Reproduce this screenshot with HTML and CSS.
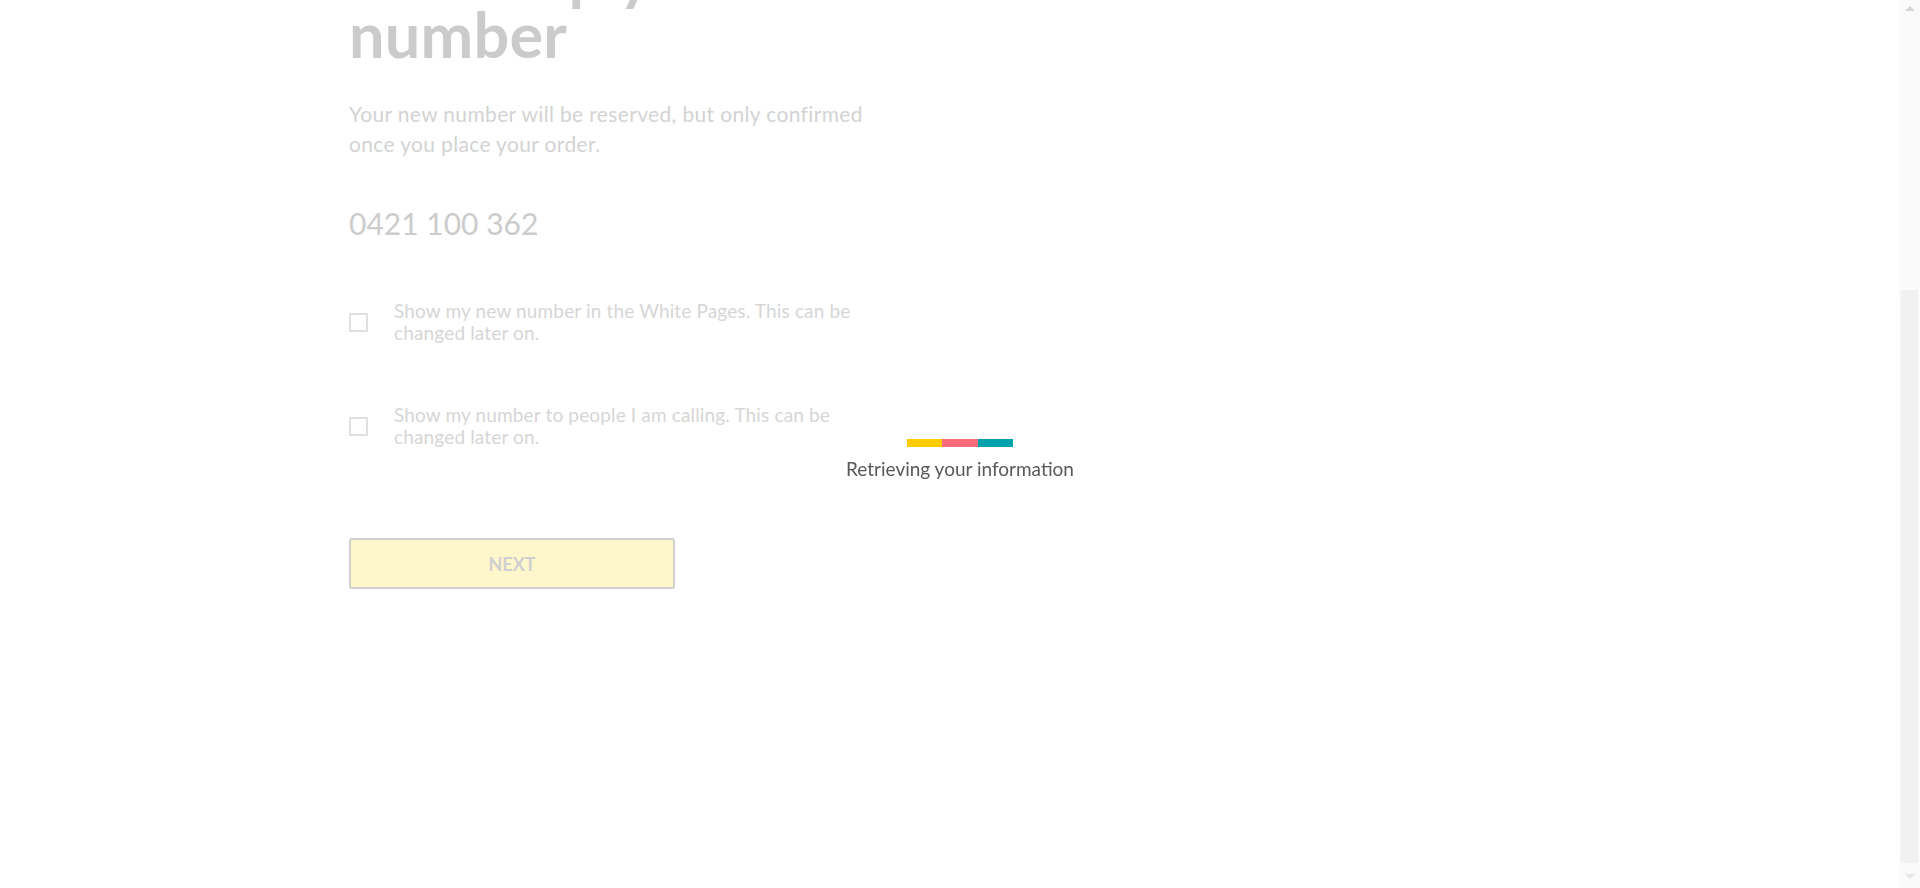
FILE: index.html
```html
<!DOCTYPE html>
<html lang="en">
<head>
<meta charset="utf-8">
<title>Your new number</title>
<link rel="stylesheet" href="styles.css">
</head>
<body>
<main class="page">
  <section class="form">
    <h1 class="title">Shake up your<br>number</h1>
    <p class="lead">Your new number will be reserved, but only confirmed once you place your order.</p>
    <div class="phone">0421 100 362</div>
    <label class="check">
      <span class="box"></span>
      <span class="check-text">Show my new number in the White Pages. This can be changed later on.</span>
    </label>
    <label class="check">
      <span class="box"></span>
      <span class="check-text">Show my number to people I am calling. This can be changed later on.</span>
    </label>
    <button class="next" type="button">NEXT</button>
  </section>
</main>

<div class="overlay">
  <div class="loader">
    <div class="bar"><span class="seg yellow"></span><span class="seg pink"></span><span class="seg teal"></span></div>
    <div class="loader-text">Retrieving your information</div>
  </div>
</div>

<div class="scrollbar">
  <span class="arrow up"></span>
  <div class="track"><div class="thumb"></div></div>
  <span class="arrow down"></span>
</div>
</body>
</html>
```

FILE: styles.css
```css
html, body {
  margin: 0;
  padding: 0;
  height: 100%;
  overflow: hidden;
  background: #ffffff;
  font-family: Lato, "Liberation Sans", sans-serif;
}

.page {
  padding-left: 349px;
  padding-right: 21px;
}

.form {
  width: 600px;
  margin-top: -56px;
  display: flex;
  flex-direction: column;
  align-items: flex-start;
}

.title {
  margin: 0;
  font-size: 63px;
  line-height: 60px;
  font-weight: 700;
  color: #cbcbcb;
  letter-spacing: 0.2px;
  white-space: nowrap;
}

.lead {
  margin: 35px 0 0;
  width: 540px;
  font-size: 21px;
  line-height: 30px;
  letter-spacing: 0.35px;
  color: #d3d3d3;
}

.phone {
  margin-top: 46px;
  font-size: 30px;
  line-height: 36px;
  color: #cccccc;
}

.check {
  display: flex;
  align-items: center;
  gap: 26px;
  margin-top: 59px;
  width: 520px;
}

.check + .check {
  margin-top: 60px;
}

.box {
  flex: none;
  width: 15px;
  height: 15px;
  border: 2px solid #e0e0e0;
  border-radius: 1px;
}

.check-text {
  font-size: 19px;
  line-height: 22px;
  letter-spacing: 0.15px;
  color: #d6d6d6;
}

.next {
  margin-top: 90px;
  width: 326px;
  height: 51px;
  background: #fff7cc;
  border: 2px solid #cfcfcf;
  border-radius: 3px;
  font-family: Lato, "Liberation Sans", sans-serif;
  font-weight: 700;
  font-size: 18px;
  color: #cfcfcf;
  padding: 0;
}

.overlay {
  position: fixed;
  inset: 0;
  display: flex;
  align-items: center;
  justify-content: center;
}

.loader {
  display: flex;
  flex-direction: column;
  align-items: center;
  gap: 11px;
  margin-top: 31px;
}

.bar {
  display: flex;
  width: 106px;
  height: 8px;
}

.seg {
  flex: 1;
}

.yellow { background: #ffcc00; }
.pink { background: #f96b7b; }
.teal { background: #00a3ad; }

.loader-text {
  font-size: 19px;
  line-height: 22px;
  color: #595959;
}

.scrollbar {
  position: fixed;
  top: 0;
  right: 0;
  width: 21px;
  height: 100%;
  background: #fafafa;
  display: flex;
  flex-direction: column;
  align-items: center;
}

.track {
  flex: 1;
  width: 100%;
  display: flex;
  flex-direction: column;
  padding-top: 273px;
  padding-bottom: 5px;
  box-sizing: border-box;
}

.thumb {
  flex: 1;
  margin: 0 2px;
  background: #f1f1f1;
}

.arrow {
  width: 0;
  height: 0;
  border-left: 5px solid transparent;
  border-right: 5px solid transparent;
}

.arrow.up {
  margin-top: 6px;
  border-bottom: 5px solid #d4d4d4;
  margin-bottom: 6px;
}

.arrow.down {
  margin-top: 6px;
  margin-bottom: 9px;
  border-top: 5px solid #e6e6e6;
}
```
